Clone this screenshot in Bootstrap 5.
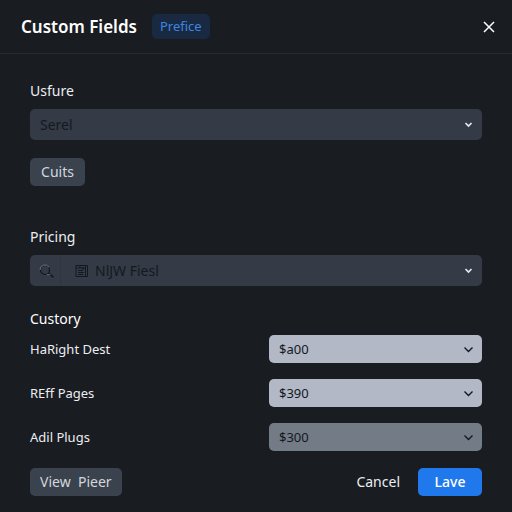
<!DOCTYPE html>
<html lang="en" data-bs-theme="dark">
<head>
<meta charset="utf-8">
<meta name="viewport" content="width=device-width, initial-scale=1">
<title>Custom Fields</title>
<link href="https://cdn.jsdelivr.net/npm/bootstrap@5.3.0/dist/css/bootstrap.min.css" rel="stylesheet">
<style>
body{background:#191c21;color:#eceef1;font:14px/20px "Noto Sans","Open Sans",sans-serif}
.panel-head{height:54px;padding:0 16px 0 21px;border-bottom:1px solid #272a2f}
.panel-title{font-size:17px;line-height:24px;font-weight:600;color:#fff}
.tag-link{background:#192942;color:#3d86e0;font-size:13px;line-height:25px;padding:0 8px;border-radius:5px;margin-left:15px}
.close-btn{width:14px;height:14px;color:#fff}
.panel-body{padding:27px 30px 16px}
.field-label{display:block;margin-bottom:8px}
.gap-section{margin-top:41px}
.field{background-color:#343a46;color:#15191f;border:0;border-radius:5px;height:31px;font-size:14px;line-height:20px;padding:0 30px 0 10px;background-size:9px 9px;background-position:right 9px center;
background-image:url("data:image/svg+xml,%3csvg xmlns='http://www.w3.org/2000/svg' viewBox='0 0 9 9'%3e%3cpath fill='none' stroke='%23e6e9ee' stroke-width='1.7' d='M1.5 3 4.5 6 7.5 3'/%3e%3c/svg%3e")}
.picker{background:#343a46;border-radius:5px;height:31px;color:#15191f}
.picker .field{background-color:transparent;padding-left:6px}
.search-part{width:31px;height:31px;padding-left:9px;border-right:1px solid #303641}
.doc-part{padding-left:14px}
.section-name{font-size:14px;line-height:20px;font-weight:400;margin:23px 0 6px}
.price{height:28px;font-size:13px;background-color:#b2b8c6;background-size:11px 11px;background-position:right 8px center;
background-image:url("data:image/svg+xml,%3csvg xmlns='http://www.w3.org/2000/svg' viewBox='0 0 11 11'%3e%3cpath fill='none' stroke='%2315191f' stroke-width='1.4' d='M1.5 3.5 5.5 7.5 9.5 3.5'/%3e%3c/svg%3e")}
.price-dim{background-color:#737b87}
.price-rows{display:grid;grid-template-columns:239fr 213fr;row-gap:16px;align-items:center;font-size:13px}
.act{height:28px;font-size:14px;line-height:20px;padding:0 10px;border:0;border-radius:5px;color:#eceef1}
.act-grey{background:#3a424e;color:#d3d7dd}
.act-cuits{min-width:55px;margin-top:18px}
.act-save{background:#1f78ec;color:#fff;width:64px;font-weight:500}
.panel-foot{margin-top:17px}
</style>
<script src="https://cdn.jsdelivr.net/npm/bootstrap@5.3.0/dist/js/bootstrap.bundle.min.js"></script>
</head>
<body>
<header class="panel-head d-flex align-items-center">
  <h1 class="panel-title mb-0">Custom Fields</h1>
  <a href="#" class="tag-link text-decoration-none">Prefice</a>
  <button type="button" class="close-btn btn p-0 border-0 d-flex ms-auto" aria-label="Close">
    <svg width="14" height="14" viewBox="0 0 14 14" fill="none" stroke="currentColor" stroke-width="1.5"><path d="M2 2l10 10M12 2L2 12"/></svg>
  </button>
</header>
<form class="panel-body">
  <label class="field-label" for="usfure">Usfure</label>
  <select id="usfure" class="form-select field"><option>Serel</option></select>
  <button type="button" class="btn act act-grey act-cuits">Cuits</button>

  <div class="gap-section">
    <label class="field-label" for="pricing">Pricing</label>
    <div class="picker d-flex align-items-center">
      <span class="search-part d-flex align-items-center flex-shrink-0">
        <svg width="16" height="14" viewBox="0 0 16 14" fill="none"><circle cx="6" cy="6" r="4.5" stroke="#15191f" stroke-width="1.2"/><path d="M1 6A5 5 0 0 1 10 3" stroke="#80868f" stroke-width=".8"/><path d="M9.300 9l5 4.200" stroke="#15191f" stroke-width="1.7"/><path d="M8 10.500l3.500 .3" stroke="#80868f" stroke-width=".7"/></svg>
      </span>
      <span class="doc-part d-flex flex-shrink-0">
        <svg width="14" height="14" viewBox="0 0 14 14" fill="none" stroke="#15191f"><path d="M1 1.500h9.500v11H1zM10.500 1.500h2v11h-2M1 4h9M3 6.500h5M3 8.500h6M3 10.500h5M5 1v3M8 3v3"/></svg>
      </span>
      <select id="pricing" class="form-select field"><option>NlJW Fiesl</option></select>
    </div>
  </div>

  <h2 class="section-name">Custory</h2>
  <div class="price-rows">
    <label for="p1">HaRight Dest</label>
    <select id="p1" class="form-select field price"><option>$a00</option></select>
    <label for="p2">REff Pages</label>
    <select id="p2" class="form-select field price"><option>$390</option></select>
    <label for="p3">Adil Plugs</label>
    <select id="p3" class="form-select field price price-dim"><option>$300</option></select>
  </div>

  <div class="panel-foot d-flex align-items-center">
    <button type="button" class="btn act act-grey">View &nbsp;Pieer</button>
    <button type="button" class="btn act ms-auto me-2">Cancel</button>
    <button type="submit" class="btn act act-save">Lave</button>
  </div>
</form>
</body>
</html>
